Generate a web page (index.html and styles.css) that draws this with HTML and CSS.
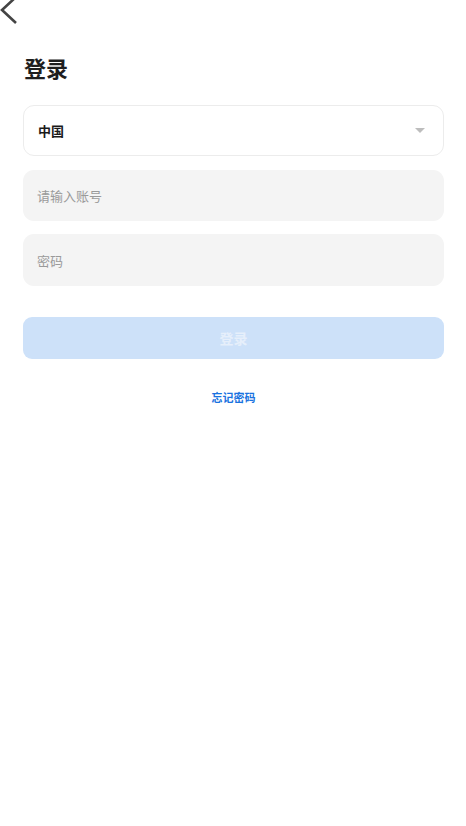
FILE: index.html
```html
<!DOCTYPE html>
<html lang="zh-CN">

<head>
  <meta charset="UTF-8">
  <meta name="viewport" content="width=device-width, initial-scale=1.0">
  <title>登录</title>
  <link rel="stylesheet" href="styles.css">
</head>

<body>
  <div id="topbar">
    <a href="#" class="back">
      <svg width="20" height="24" viewBox="0 0 20 24">
        <polyline points="16,-3 2,10 16,23" fill="none" stroke="#444" stroke-width="2.6" />
      </svg>
    </a>
  </div>

  <div id="login">
    <h1>登录</h1>

    <form onsubmit="event.preventDefault()">
      <div class="field select">
        <span>中国</span>
        <i class="arrow"></i>
      </div>
      <div class="field input">
        <input type="text" placeholder="请输入账号">
      </div>
      <div class="field input">
        <input type="password" placeholder="密码">
      </div>
      <button type="submit" class="submit" disabled>登录</button>
    </form>

    <div class="forgot"><a href="#">忘记密码</a></div>
  </div>
</body>

</html>
```

FILE: styles.css
```css
body {
  margin: 0;
  font-family: "Noto Sans CJK SC", "Noto Sans", sans-serif;
  background-color: #fff;
  color: #222;
}

#topbar {
  height: 22px;
}

.back {
  display: block;
  width: 20px;
  height: 22px;
}

.back svg {
  display: block;
  overflow: visible;
}

#login {
  padding: 0 22px 0 23px;
}

h1 {
  margin: 30px 0 0 1px;
  font-size: 22px;
  line-height: 30px;
  font-weight: bold;
  color: #1e1e1e;
}

form {
  margin-top: 23px;
}

.field {
  box-sizing: border-box;
  height: 51px;
  border-radius: 11px;
  display: flex;
  align-items: center;
  padding: 0 14px;
}

.select {
  border: 1px solid #ececec;
  justify-content: space-between;
  font-size: 13px;
  font-weight: bold;
  color: #1a1a1a;
}

.arrow {
  width: 0;
  height: 0;
  border-left: 5px solid transparent;
  border-right: 5px solid transparent;
  border-top: 5px solid #bdbdbd;
  margin-right: 4px;
}

.input {
  background-color: #f4f4f4;
  margin-top: 14px;
}

.input + .input {
  margin-top: 13px;
  height: 52px;
}

.input input {
  border: none;
  outline: none;
  background: transparent;
  width: 100%;
  padding: 0;
  font-family: inherit;
  font-size: 13px;
  color: #333;
}

.input input::placeholder {
  color: #9a9a9a;
}

.submit {
  display: block;
  width: 100%;
  height: 42px;
  margin-top: 31px;
  border: none;
  border-radius: 9px;
  background-color: #cde1f9;
  color: #e6effb;
  font-family: inherit;
  font-size: 14px;
  font-weight: bold;
}

.forgot {
  margin-top: 28px;
  text-align: center;
  line-height: 16px;
}

.forgot a {
  font-size: 11px;
  font-weight: bold;
  color: #1a73e0;
  text-decoration: none;
}
```
